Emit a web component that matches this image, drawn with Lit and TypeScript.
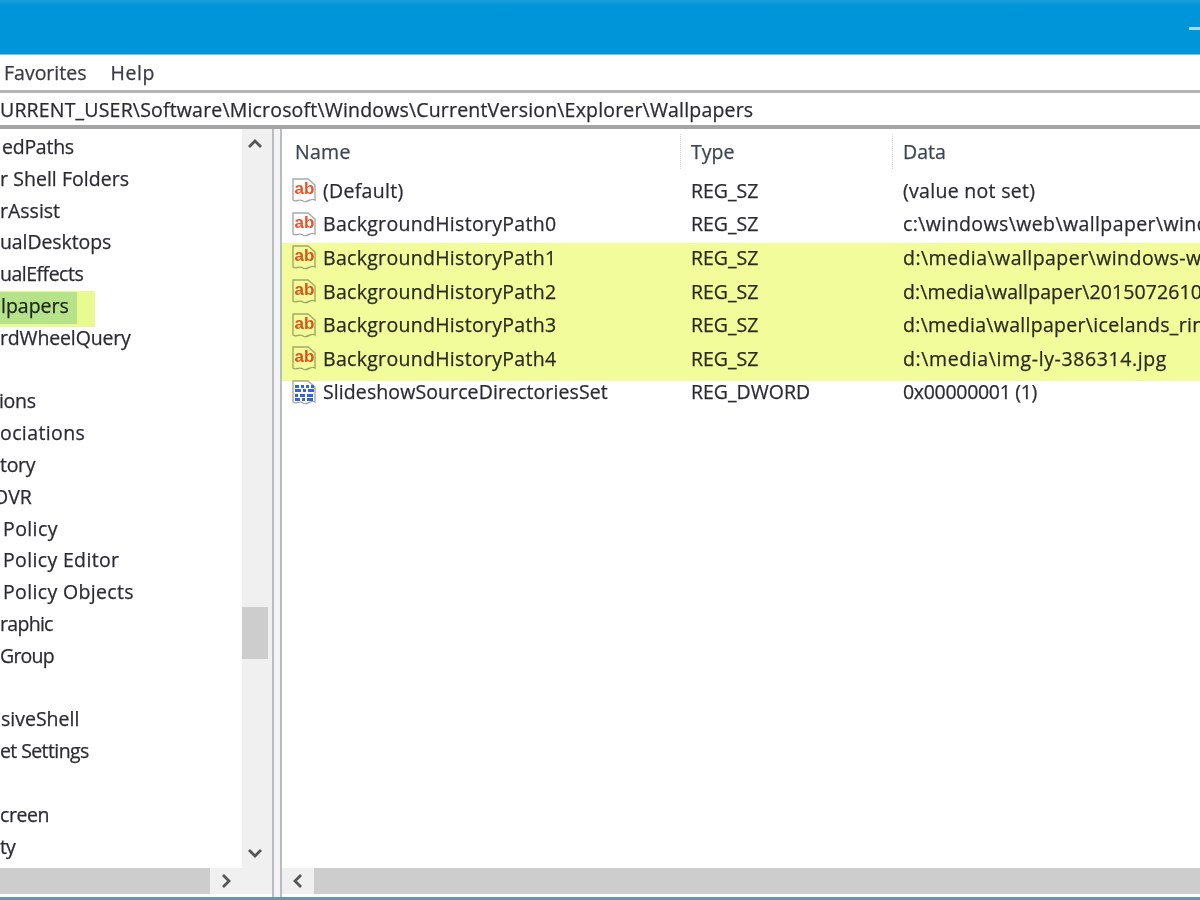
import { LitElement, html, css, svg } from "lit";
import { customElement } from "lit/decorators.js";

const tree: [string, number, number?][] = [
  ["edPaths", 2, -0.25], ["r Shell Folders", 0, 0.05], ["rAssist", 0, 0], ["ualDesktops", 0, -0.1], ["ualEffects", 0, -0.5],
  ["lpapers", 1, 0], ["rdWheelQuery", 0, -0.15], ["", 0], ["ions", -1, -0.3], ["ociations", 0, 0.4], ["tory", 0, -0.3], ["OVR", -7, 0],
  ["Policy", 3, 0.4], ["Policy Editor", 3, 0.35], ["Policy Objects", 3, 0.35], ["raphic", 0, -0.7], ["Group", 0, -0.8], ["", 0],
  ["siveShell", 1, 0], ["et Settings", 0, -0.6], ["", 0], ["creen", 0, -0.4], ["ty", 0, -1],
];

const values: [string, string, string, string, number, number][] = [
  ["s", "(Default)", "REG_SZ", "(value not set)", 0.3, 0.3],
  ["s", "BackgroundHistoryPath0", "REG_SZ", "c:\\windows\\web\\wallpaper\\wind", 0.4, 0.3],
  ["s", "BackgroundHistoryPath1", "REG_SZ", "d:\\media\\wallpaper\\windows-w", 0.45, 0.3],
  ["s", "BackgroundHistoryPath2", "REG_SZ", "d:\\media\\wallpaper\\2015072610", 0.1, 0.3],
  ["s", "BackgroundHistoryPath3", "REG_SZ", "d:\\media\\wallpaper\\icelands_rin", 0.3, 0.3],
  ["s", "BackgroundHistoryPath4", "REG_SZ", "d:\\media\\img-ly-386314.jpg", 0.6, 0.3],
  ["d", "SlideshowSourceDirectoriesSet", "REG_DWORD", "0x00000001 (1)", -0.3, 0.1],
];

const page = svg`<path d="M2 3H17L24 9V24C20 21 16 28 12 25C8 22 5 27 2 24Z" fill="#fff" fill-opacity=".95" stroke="#a9a9a9" stroke-width="1.4"/>`;
const szIcon = html`<svg class="ico" viewBox="0 0 26 28">${page}<text x="3.5" y="18" font-family="Liberation Sans" font-weight="700" font-size="17" fill="#e8542a">ab</text></svg>`;
const bits = [[4,7,4],[10,7,3],[15,7,3],[20,7,3],[4,11,6],[12,11,3],[17,11,6],[4,16,3],[9,16,5],[16,16,6],[4,20,5],[11,20,3],[16,20,6]];
const dwIcon = html`<svg class="ico" viewBox="0 0 26 28">${page}${bits.map(([x,y,w]) => svg`<rect x=${x} y=${y} width=${w} height="3" fill="#2f66e0"/>`)}</svg>`;

const chev = (d: string) => html`<svg class="chev" viewBox="0 0 14 14"><path d=${d} fill="none" stroke="#555" stroke-width="2.8"/></svg>`;

@customElement("app-root")
export class AppRoot extends LitElement {
  static styles = css`
    :host { display: block; width: 1200px; height: 900px; overflow: hidden; background: #fff; }
    .win {
      width: 1200px; height: 900px; display: grid; grid-template-rows: 55px 38px 32px 4px 1fr 3px;
      font-family: "Open Sans", "Noto Sans", sans-serif; font-size: 19.5px; color: #2b2b33;
      -webkit-text-stroke: 0.25px currentColor;
      filter: blur(0.7px); background: #fff;
    }
    .title { background: linear-gradient(#1a9dd9, #0095d9 6px); border-bottom: 1px solid #6fc6ee; display: flex; justify-content: flex-end; align-items: flex-start; }
    .min { width: 11px; height: 3px; background: #9fdcf6; margin-top: 27px; }
    .menu { display: flex; align-items: center; gap: 24px; padding: 0 0 0 4px; border-bottom: 3px solid #b4b4b4; background: #fff; color: #3a3a44; }
    .help { letter-spacing: 0.6px; }
    .addr { display: flex; align-items: center; white-space: nowrap; overflow: hidden; letter-spacing: 0.18px; }
    .rule { background: #a4a4a4; }
    .panes { display: grid; grid-template-columns: 272px 10px 1fr; min-height: 0; }
    .sash { border-left: 2px solid #b5bcc4; border-right: 2px solid #b5bcc4; background: #f4f4f4; }
    .left { display: grid; grid-template-columns: 242px 30px; grid-template-rows: 1fr 26px 3px; min-height: 0; }
    .tree { position: relative; padding-top: 2px; overflow: hidden; }
    .node { height: 31.8px; line-height: 31px; white-space: nowrap; }
    .vbar { background: #f0f0f0; display: flex; flex-direction: column; align-items: center; justify-content: space-between; position: relative; padding: 8px 4px 8px 0; }
    .thumbV { position: absolute; left: 0; top: 478px; width: 26px; height: 52px; background: #cdcdcd; }
    .hbar { background: #f0f0f0; display: flex; align-items: stretch; }
    .hthumb { background: #cdcdcd; }
    .hl { width: 210px; }
    .arrow { width: 32px; display: flex; align-items: center; justify-content: center; }
    .corner { background: #f0f0f0; }
    .chev { width: 14px; height: 14px; }
    .right { display: grid; grid-template-rows: 1fr 26px 3px; min-height: 0; }
    .list { position: relative; overflow: hidden; min-width: 0; }
    .cols { display: grid; grid-template-columns: 399px 212px 1fr; }
    .head { height: 44.5px; align-items: center; color: #3d4650; }
    .hcell { padding-left: 10px; height: 35px; line-height: 35px; border-right: 1px dotted #d8d8d8; }
    .hcell:first-child { padding-left: 13px; letter-spacing: 0.3px; }
    .hcell:last-child { border-right: 0; }
    .row { height: 33.6px; align-items: center; white-space: nowrap; }
    .name { display: flex; align-items: center; gap: 6px; padding-left: 9px; }
    .ico { width: 26px; height: 28px; flex: none; }
    .cell { padding-left: 10px; overflow: hidden; }
    .mark { position: absolute; left: 0; right: 0; top: 114px; height: 138px; background: #f3fc9a; mix-blend-mode: multiply; }
    .sel { position: absolute; left: 0; top: 162px; width: 95px; height: 36px; background: #e9fb90; mix-blend-mode: multiply; }
    .selIn { width: 77px; height: 32px; margin-top: 1px; background: #b5e28b; }
    .strip { background: #fff; }
    .foot { background: #6a96ad; }
    .rhbar { background: #f0f0f0; display: flex; }
    .rhthumb { flex: 1; background: #cdcdcd; }
  `;

  render() {
    return html`<div class="win">
      <div class="title"><div class="min"></div></div>
      <div class="menu"><span>Favorites</span><span class="help">Help</span></div>
      <div class="addr">URRENT_USER\\Software\\Microsoft\\Windows\\CurrentVersion\\Explorer\\Wallpapers</div>
      <div class="rule"></div>
      <div class="panes">
        <div class="left">
          <div class="tree">
            ${tree.map(([t, x, s]) => html`<div class="node" style="margin-left:${x}px;letter-spacing:${s ?? 0}px">${t}</div>`)}
            <div class="sel"><div class="selIn"></div></div>
          </div>
          <div class="vbar">${chev("M1 10L7 4L13 10")}<div class="thumbV"></div>${chev("M1 4L7 10L13 4")}</div>
          <div class="hbar"><div class="hthumb hl"></div><div class="arrow">${chev("M4 1L10 7L4 13")}</div></div>
          <div class="corner"></div>
          <div class="strip"></div><div class="strip"></div>
        </div>
        <div class="sash"></div>
        <div class="right">
          <div class="list">
            <div class="cols head">
              <div class="hcell">Name</div><div class="hcell">Type</div><div class="hcell">Data</div>
            </div>
            ${values.map(([k, n, ty, d, s, ns]) => html`<div class="cols row">
              <div class="name">${k === "s" ? szIcon : dwIcon}<span style="letter-spacing:${ns}px">${n}</span></div>
              <div class="cell">${ty}</div><div class="cell" style="letter-spacing:${s}px">${d}</div>
            </div>`)}
            <div class="mark"></div>
          </div>
          <div class="rhbar"><div class="arrow">${chev("M10 1L4 7L10 13")}</div><div class="rhthumb"></div></div>
          <div class="strip"></div>
        </div>
      </div>
      <div class="foot"></div>
    </div>`;
  }
}
